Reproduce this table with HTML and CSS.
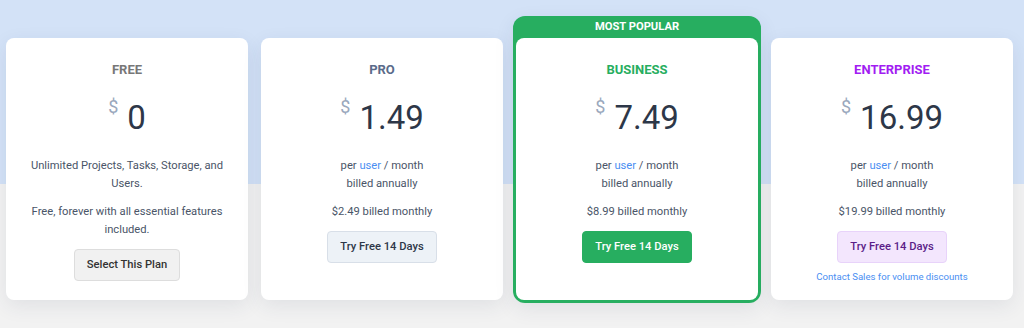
FILE: index.html
```html
<!DOCTYPE html>
<html lang="en">
<head>
<meta charset="utf-8">
<title>Pricing</title>
<link rel="stylesheet" href="styles.css">
</head>
<body>
<section class="pricing">
  <div class="plans">
    <div class="plan">
      <h3 class="plan-name name-free">FREE</h3>
      <div class="price"><span class="cur">$</span><span class="amount">0</span></div>
      <p class="desc">Unlimited Projects, Tasks, Storage, and Users.</p>
      <p class="desc">Free, forever with all essential features included.</p>
      <button class="btn btn-free">Select This Plan</button>
    </div>

    <div class="plan">
      <h3 class="plan-name name-pro">PRO</h3>
      <div class="price"><span class="cur">$</span><span class="amount">1.49</span></div>
      <p class="desc">per <a class="link" href="#">user</a> / month<br>billed annually</p>
      <p class="desc">$2.49 billed monthly</p>
      <button class="btn btn-pro">Try Free 14 Days</button>
    </div>

    <div class="featured">
      <div class="featured-label">MOST POPULAR</div>
      <div class="plan plan-inner">
        <h3 class="plan-name name-business">BUSINESS</h3>
        <div class="price"><span class="cur">$</span><span class="amount">7.49</span></div>
        <p class="desc">per <a class="link" href="#">user</a> / month<br>billed annually</p>
        <p class="desc">$8.99 billed monthly</p>
        <button class="btn btn-business">Try Free 14 Days</button>
      </div>
    </div>

    <div class="plan">
      <h3 class="plan-name name-enterprise">ENTERPRISE</h3>
      <div class="price"><span class="cur">$</span><span class="amount">16.99</span></div>
      <p class="desc">per <a class="link" href="#">user</a> / month<br>billed annually</p>
      <p class="desc">$19.99 billed monthly</p>
      <button class="btn btn-enterprise">Try Free 14 Days</button>
      <a class="contact" href="#">Contact Sales for volume discounts</a>
    </div>
  </div>
</section>
</body>
</html>
```

FILE: styles.css
```css
* { box-sizing: border-box; }

html, body {
  margin: 0;
  padding: 0;
}

body {
  font-family: Roboto, "Liberation Sans", Arial, sans-serif;
  background: #f2f2f2;
  width: 1024px;
  height: 328px;
  overflow: hidden;
}

.pricing {
  height: 328px;
  background: linear-gradient(to bottom, #d3e2f7 0, #d3e2f7 184px, #f2f2f2 184px, #f2f2f2 100%);
  padding: 38px 11px 0 6px;
}

.plans {
  display: flex;
  gap: 13px;
  align-items: stretch;
}

.plan {
  width: 242px;
  flex: 0 0 242px;
  background: #ffffff;
  border-radius: 8px;
  box-shadow: 0 6px 20px rgba(40, 60, 90, 0.09);
  padding: 23px 16px 16px;
  display: flex;
  flex-direction: column;
  align-items: center;
  text-align: center;
}

.plan-name {
  margin: 0;
  font-size: 13px;
  line-height: 18px;
  font-weight: 700;
}

.name-free { color: #777777; }
.name-pro { color: #5a6b8a; }
.name-business { color: #27ae60; }
.name-enterprise { color: #a21df2; }

.price {
  margin-top: 19px;
  display: flex;
  align-items: flex-start;
  justify-content: center;
  height: 40px;
}

.cur {
  font-size: 18px;
  line-height: 18px;
  color: #9aa8bd;
  margin-right: 9px;
}

.amount {
  font-size: 33px;
  line-height: 40px;
  color: #2d3748;
  font-weight: 400;
}

.desc {
  margin: 0;
  font-size: 11.2px;
  line-height: 18px;
  color: #4a5568;
}

.price + .desc { margin-top: 19px; }
.desc + .desc { margin-top: 10px; }

.link {
  color: #4a8ef2;
  text-decoration: none;
}

.btn {
  margin-top: 10px;
  font-family: inherit;
  font-size: 11.2px;
  font-weight: 500;
  line-height: 16px;
  padding: 7px 12px;
  border-radius: 4px;
  border: 1px solid transparent;
  cursor: pointer;
}

.btn-free {
  background: #f1f1f1;
  border-color: #dddddd;
  color: #333333;
}

.btn-pro {
  background: #edf2f7;
  border-color: #d8dfe8;
  color: #2d3748;
}

.btn-business {
  background: #27ae60;
  border-color: #27ae60;
  color: #ffffff;
}

.btn-enterprise {
  background: #f3e6fd;
  border-color: #e8d3fa;
  color: #5b1d88;
}

.contact {
  margin-top: 6px;
  font-size: 9.6px;
  line-height: 15px;
  color: #4a8ef2;
  text-decoration: none;
}

.featured {
  flex: 0 0 248px;
  margin: -22px -3px -3px;
  background: #27ae60;
  border-radius: 12px;
  padding: 0 3px 3px;
  display: flex;
  flex-direction: column;
  box-shadow: 0 6px 20px rgba(40, 60, 90, 0.09);
}

.featured-label {
  height: 22px;
  line-height: 22px;
  text-align: center;
  color: #ffffff;
  font-size: 11.2px;
  font-weight: 700;
}

.plan-inner {
  flex: 1 1 auto;
  box-shadow: none;
}
```
